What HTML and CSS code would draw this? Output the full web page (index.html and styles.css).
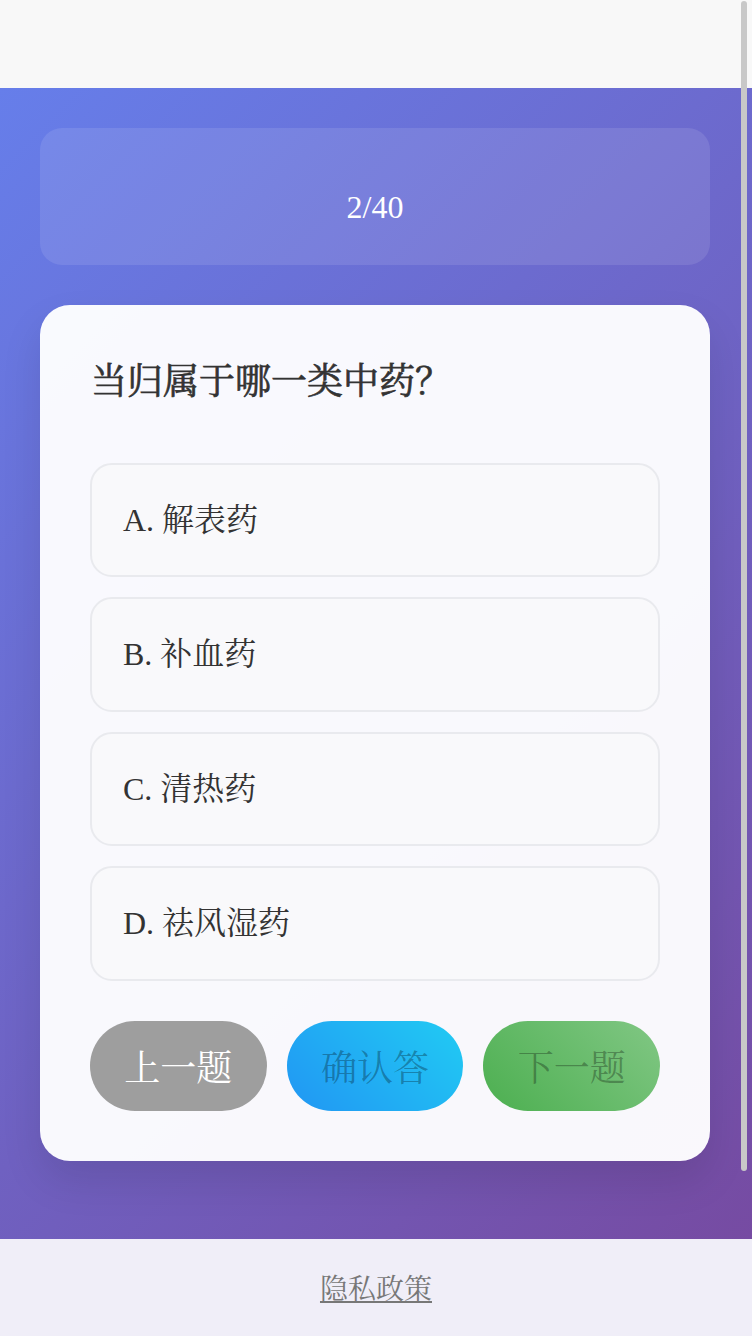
FILE: index.html
```html
<!DOCTYPE html>
<html lang="zh-CN">
<head>
<meta charset="utf-8">
<meta name="viewport" content="width=device-width, initial-scale=1">
<title>中药测验</title>
<link rel="stylesheet" href="styles.css">
</head>
<body>
<header class="topbar"></header>
<main class="quiz">
  <section class="progress-card">
    <div class="progress-text">2/40</div>
  </section>
  <section class="question-card">
    <h2 class="question">当归属于哪一类中药？</h2>
    <div class="options">
      <div class="option">A. 解表药</div>
      <div class="option">B. 补血药</div>
      <div class="option">C. 清热药</div>
      <div class="option">D. 祛风湿药</div>
    </div>
    <div class="actions">
      <button class="btn btn-prev">上一题</button>
      <button class="btn btn-confirm">确认答</button>
      <button class="btn btn-next">下一题</button>
    </div>
  </section>
</main>
<footer class="footer">
  <a class="privacy" href="#">隐私政策</a>
</footer>
<div class="scroll-thumb"></div>
</body>
</html>
```
FILE: styles.css
```css
* { box-sizing: border-box; }
html, body {
  margin: 0;
  padding: 0;
}
body {
  font-family: "Liberation Serif", "Noto Serif CJK SC", "Noto Serif SC", "Source Han Serif SC", "AR PL UMing CN", serif;
  color: #333;
  background: #f0eef8;
}
.topbar {
  height: 88px;
  background: #f8f8f8;
}
.quiz {
  background: linear-gradient(135deg, #667eea 0%, #764ba2 100%);
  padding: 40px 42px 78px 40px;
  display: flex;
  flex-direction: column;
  gap: 40px;
}
.progress-card {
  height: 137px;
  border-radius: 22px;
  background: rgba(255, 255, 255, 0.1);
  display: flex;
  align-items: center;
  justify-content: center;
  padding-top: 20px;
}
.progress-text {
  color: #fff;
  font-size: 32px;
  line-height: 36px;
}
.question-card {
  background: rgba(255, 255, 255, 0.96);
  border-radius: 30px;
  padding: 50px;
  box-shadow: 0 20px 40px rgba(0, 0, 0, 0.1);
}
.question {
  margin: 6px 1px 59px;
  font-size: 36px;
  line-height: 43px;
  font-weight: normal;
  -webkit-text-stroke: 0.7px #333;
  color: #333;
}
.options {
  display: flex;
  flex-direction: column;
  gap: 20px;
}
.option {
  border: 2px solid #e9eaee;
  border-radius: 22px;
  background: #f9f9fb;
  padding: 36px 31px;
  font-size: 32px;
  line-height: 38.4px;
  color: #333;
}
.actions {
  display: flex;
  gap: 20px;
  margin-top: 40px;
}
.btn {
  flex: 1;
  height: 90px;
  border: none;
  border-radius: 45px;
  font-family: "Liberation Serif", "Noto Serif CJK SC", "Noto Serif SC", "Source Han Serif SC", "AR PL UMing CN", serif;
  font-size: 36px;
  padding: 0;
}
.btn-prev {
  background: #9e9e9e;
  color: #fff;
}
.btn-confirm {
  background: linear-gradient(45deg, #2196f3 0%, #21cbf3 100%);
  color: rgba(0, 0, 0, 0.3);
}
.btn-next {
  background: linear-gradient(45deg, #4caf50 0%, #81c784 100%);
  color: rgba(0, 0, 0, 0.3);
}
.footer {
  height: 287px;
  padding-top: 33px;
  text-align: center;
}
.privacy {
  font-size: 28px;
  line-height: 36px;
  color: #777;
  text-decoration: underline;
}
.scroll-thumb {
  position: fixed;
  top: 1px;
  right: 5px;
  width: 6px;
  height: 1170px;
  border-radius: 3px;
  background: #c8c8c8;
}
```
